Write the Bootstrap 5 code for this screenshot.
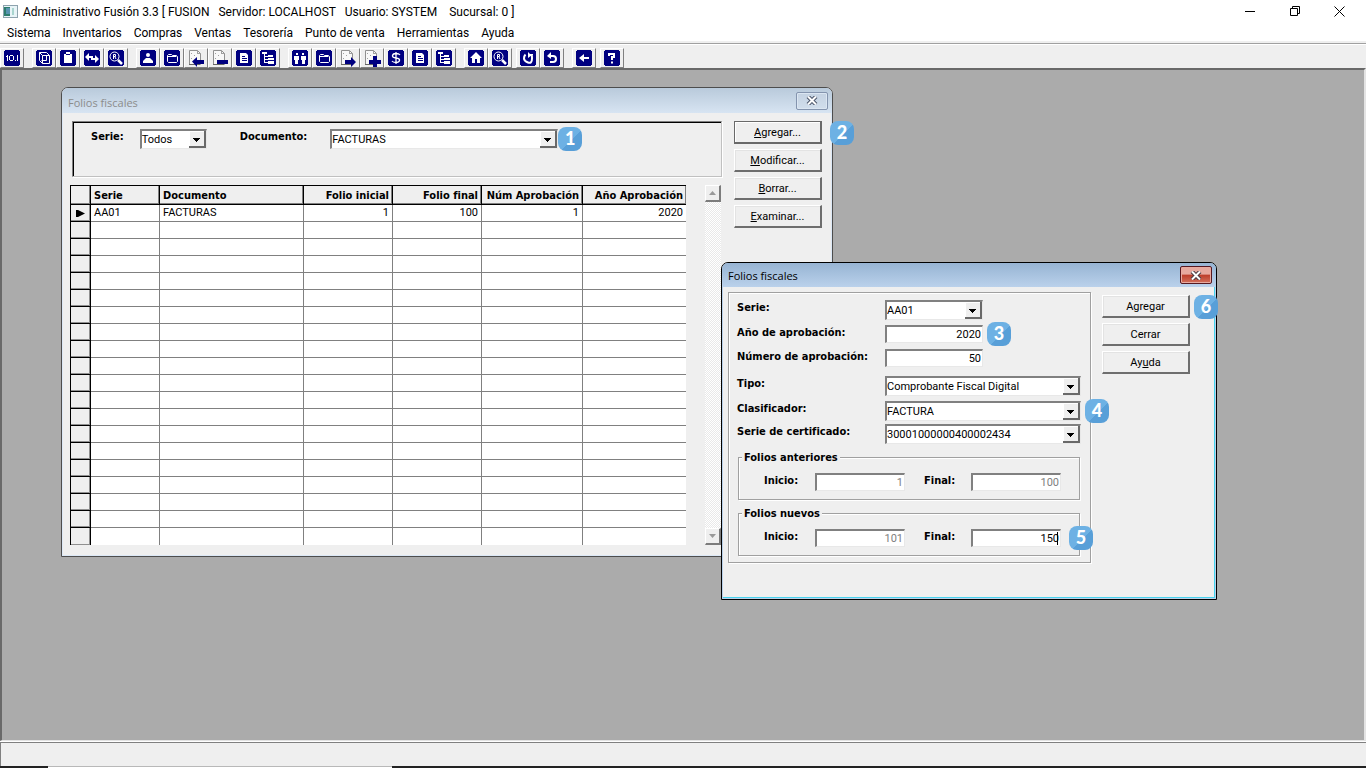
<!DOCTYPE html>
<html lang="es">
<head>
<meta charset="utf-8">
<meta name="viewport" content="width=device-width, initial-scale=1">
<title>Administrativo Fusión 3.3</title>
<link rel="stylesheet" href="https://cdn.jsdelivr.net/npm/bootstrap@5.3.0/dist/css/bootstrap.min.css">
<style>
  :root { --face: #efefef; --navy: #000080; }
  body { background: var(--face); color: #000; font: 11px/15px Roboto, "Open Sans", sans-serif; overflow: hidden; }
  /* application frame */
  .app-title { height: 22px; font-size: 12px; padding-left: 3px; }
  .app-title svg { display: block; }
  .app-title .caption-text { white-space: pre; padding-top: 2px; }
  .frame-btn { width: 45px; height: 22px; background: none; border: 0; padding: 0; display: grid; place-items: center; }
  .app-menu { height: 19px; font-size: 12px; padding-left: 1px; }
  .app-menu a { color: #000; text-decoration: none; padding: 4px 6px 0; }
  .tool-strip { border-top: 1px solid #a0a0a0; box-shadow: inset 0 1px #fff; padding: 4px 0 0; height: 25px; margin-top: 2px; }
  .tool-btn { width: 24px; height: 20px; padding: 2px 2px 1px 3px; border: 1px solid; border-color: #fff #808080 #808080 #fff; background: var(--face); display: block; }
  .tool-btn svg { display: block; width: 16px; height: 16px; overflow: visible; margin-top: -1px; }
  .workspace { background: #ababab; border: solid; border-width: 2px 2px 1px 2px; border-color: #696969 #e3e3e3 #e3e3e3 #696969; }
  .status-bar { height: 24px; margin-top: 1px; border-top: 1px solid #808080; border-left: 1px solid #808080; box-shadow: 0 -1px #fff; }
  .task-edge { height: 2px; background: #222; }
  .task-edge span { display: block; width: 344px; height: 2px; margin-left: 48px; background: #fff; border-top: 1px solid #b8b8b8; }
  /* child windows */
  .mdi { background: var(--face); border: 1px solid #4d4d4d; border-radius: 7px 7px 0 0; box-shadow: inset 0 0 0 1px #dce8f6; }
  .mdi-list { left: 59px; top: 17px; width: 772px; }
  .mdi-edit { left: 719px; top: 192px; width: 496px; border-color: #000; box-shadow: inset 0 0 0 1px #b9d1ea, inset -2px -2px #46d3ee; padding-bottom: 36px; }
  .mdi-title { height: 25px; border-radius: 6px 6px 0 0; padding: 0 4px 0 6px; font: 11px/25px "Open Sans", sans-serif; background: linear-gradient(#b9cadb, #d7e4f2); color: #8c8c8c; }
  .mdi-edit .mdi-title { background: linear-gradient(#97b4d3, #bad1eb); color: #000; height: 24px; }
  .mdi-close { width: 32px; height: 18px; padding: 0; border: 1px solid #8494ae; border-radius: 2px; background: linear-gradient(#c4d2e2, #d1deec); box-shadow: inset 0 0 0 1px #dbe6f2; display: grid; place-items: center; }
  .mdi-edit .mdi-close { border-color: #561820; background: linear-gradient(#e7a99f 0 45%, #bd3d2a 50%, #d2705c); box-shadow: inset 0 0 0 1px #e8aaa0; }
  .list-body { padding: 8px 8px 11px 10px; }
  .edit-body { padding: 5px 0 0 6px; }
  .action-col { gap: 5px; margin-left: 12px; margin-right: 2px; }
  .mdi-edit .action-col { margin: 3px 0 0 11px; }
  /* classic controls */
  .classic-btn { width: 88px; height: 23px; font-size: 11px; line-height: 19px; padding: 0; color: #000; background: var(--face); border: solid; border-width: 1px 2px 2px 1px; border-color: #fff #6e6e6e #6e6e6e #fff; box-shadow: inset 1px 1px #e3e3e3; display: block; }
  .classic-btn.is-default { border-color: #696969; box-shadow: inset 1px 1px #fff; }
  .field { display: block; width: 100%; height: 18px; color: #000; background-color: #fff; border: solid; border-width: 2px 1px 1px 2px; border-color: #808080 #e8e8e8 #e8e8e8 #808080; border-radius: 0; padding: 0 1px; font-size: 11px; line-height: 15px; outline: 0; }
  select.field { height: 20px; padding: 0; appearance: none; background: #fff url("data:image/svg+xml,%3Csvg xmlns='http://www.w3.org/2000/svg' width='17' height='17' shape-rendering='crispEdges'%3E%3Cpath fill='%23efefef' d='M0 0h17v17H0z'/%3E%3Cpath fill='%23696969' d='M15 0h2v17H0v-2h15z'/%3E%3Cpath fill='%23fff' d='M0 0h15v1H1v14H0z'/%3E%3Cpath d='M4 7h7v1H4zM5 8h5v1H5zM6 9h3v1H6zM7 10h1v1H7z'/%3E%3C/svg%3E") no-repeat right top; }
  input.field { text-align: right; }
  input.field:disabled { color: #808080; -webkit-text-fill-color: #808080; opacity: 1; }
  .caption-bold, .grid-table th, .etched legend { font-family: "DejaVu Sans Condensed", "Open Sans", sans-serif; font-weight: 700; font-size: 11px; line-height: 15px; }
  .filter-panel { height: 56px; padding: 7px 18px; border: 1px solid; border-color: #808080 #c0c0c0 #c0c0c0 #808080; box-shadow: inset 1px 1px #000, 1px 1px #fff; }
  .doc-label { margin: 0 23px 0 33px; }
  .w-serie { width: 67px; } .w-doc { width: 228px; }
  .grid-table { width: 616px; table-layout: fixed; border-collapse: collapse; background: #fff; margin: 0 0 0 -2px; }
  .grid-table th, .grid-table td { height: 17px; padding: 0 3px; line-height: 14px; border: solid #808080; border-width: 0 1px 1px 0; overflow: hidden; white-space: nowrap; text-align: right; }
  .grid-table thead th { height: 19px; line-height: 15px; background: var(--face); border: 1px solid #000; box-shadow: inset -1px -1px #808080; }
  .grid-table tr > :nth-child(2), .grid-table tr > :nth-child(3) { text-align: left; }
  .grid-table tbody tr > :first-child { background: var(--face); border: 1px solid #000; box-shadow: inset -1px -1px #909090; padding: 0 5px; }
  .grid-table tr > :last-child { border-right: 0; }
  .grid-table tbody tr:last-child > * { border-bottom: 0; }
  .c-mark { width: 20px; } .c-serie { width: 69px; } .c-doc { width: 144px; } .c-ini, .c-fin { width: 89px; } .c-num { width: 101px; }
  .scroll-track { width: 16px; margin-right: 1px; background: repeating-conic-gradient(#e9e9e9 0 25%, #fff 0 50%) 0 0 / 2px 2px; }
  .scroll-btn { width: 16px; height: 17px; padding: 0; background: var(--face); border: solid; border-width: 1px 2px 2px 1px; border-color: #fff #7c7c7c #7c7c7c #fff; display: grid; place-items: center; }
  .etched { border: 1px solid #a0a0a0; box-shadow: 1px 1px #fff, inset 1px 1px #fff; margin: 0; padding: 0; }
  .edit-frame { width: 363px; padding: 7px 9px 6px 8px; }
  .edit-grid { display: grid; grid-template-columns: 148px 1fr; grid-template-rows: 25px 24px 27px 25px 23px 22px; align-items: start; }
  .w-short { width: 98px; }
  fieldset.etched { height: 43px; margin: 11px 1px 0 1px; position: relative; padding: 15px 18px 0 25px; display: flex; align-items: flex-start; }
  fieldset.etched + fieldset.etched { margin-top: 13px; }
  .etched legend { position: absolute; top: -8px; left: 3px; width: auto; padding: 0 2px; margin: 0; background: var(--face); }
  .w-label { width: 51px; } .w-num { width: 90px; } .gap-col { width: 19px; }
  .caret { width: 1px; height: 13px; right: 3px; top: 3px; background: #000; }
  .step { width: 24px; height: 24px; border-radius: 8px; color: #fff; font: 900 18px/23px Lato, sans-serif; text-align: center; background: linear-gradient(135deg, #6db1e4 55%, #589fd8 56%); z-index: 3; }
</style>
</head>
<body class="vh-100 d-flex flex-column">

<svg class="d-none">
  <symbol id="tile" viewBox="0 0 16 16"><path fill="#000080" d="M1 0h14v1h1v14h-1v1H1v-1H0V1h1z"/></symbol>
  <symbol id="i-folder" viewBox="0 0 16 16"><use href="#tile"/><path fill="none" stroke="#fff" d="M3.500 5.500l1-1h3l1 1h4l1 1v5l-1 1h-8l-1-1zM3.500 6.500h9"/></symbol>
  <symbol id="i-doc" viewBox="0 0 16 16"><use href="#tile"/><path fill="#fff" d="M4 3h6l2 2v8H4z"/><path fill="#000080" d="M6 6h3v1H6zM6 8h5v1H6zM6 10h5v1H6z"/></symbol>
  <symbol id="i-tree" viewBox="0 0 16 16"><use href="#tile"/><path fill="#fff" d="M2 2h5v2H2zM4 4h1v9H4zM5 6h3v1H5zM5 9h3v1H5zM5 12h3v1H5zM8 5h5v2H8zM8 8h6v2H8zM8 11h6v3H8z"/></symbol>
  <symbol id="i-zoom" viewBox="0 0 16 16"><use href="#tile"/><g fill="none" stroke="#fff"><circle cx="6.500" cy="6.500" r="4.500"/><path d="M5.500 9V4.500h2v2h-2M7 7l1 2"/><path stroke-width="2.500" d="M10 10l4 4"/></g></symbol>
  <symbol id="i-page" viewBox="0 0 17 17"><path fill="#f8f8f8" stroke="#909090" d="M1.500.5h8l3 3v11h-11z"/><path fill="#a0a0a0" d="M9 0h1v3h3v1H9zM3 3h1v1H3zM6 5h1v1H6zM3 8h1v1H3z"/><path fill="#666" d="M1 14h11v1H1z"/></symbol>
</svg>

<header class="bg-white">
  <div class="app-title d-flex align-items-center">
    <svg width="16" height="13" class="me-1" shape-rendering="crispEdges"><path fill="#8ea3ae" d="M0 0h15v13H0z"/><path fill="#e8f4f7" d="M1 1h13v11H1z"/><path fill="#2e7d6e" d="M1 2h6v9H1z"/><path fill="#5894b0" d="M3 3h4v6H3z"/><path fill="#a9d5cf" d="M9 3h2v7H9z"/></svg>
    <span class="caption-text">Administrativo Fusión 3.3 [ FUSION   Servidor: LOCALHOST   Usuario: SYSTEM    Sucursal: 0 ]</span>
    <div class="ms-auto d-flex pe-1">
      <button class="frame-btn" aria-label="Minimizar"><svg width="10" height="10"><path stroke="#000" d="M0 5.500h10"/></svg></button>
      <button class="frame-btn" aria-label="Restaurar"><svg width="10" height="10"><path fill="none" stroke="#000" d="M.5 2.500h7v7h-7zM2.500 2V.5h7v7H8"/></svg></button>
      <button class="frame-btn" aria-label="Cerrar"><svg width="11" height="11"><path stroke="#000" d="M.5.5l10 10M10.500.5l-10 10"/></svg></button>
    </div>
  </div>
  <nav class="app-menu d-flex">
    <a href="#">Sistema</a><a href="#">Inventarios</a><a href="#">Compras</a><a href="#">Ventas</a><a href="#">Tesorería</a><a href="#">Punto de venta</a><a href="#">Herramientas</a><a href="#">Ayuda</a>
  </nav>
</header>

<div class="tool-strip d-flex" role="toolbar" aria-label="Herramientas">
  <div class="d-flex me-2">
    <button class="tool-btn" aria-label="10.1"><svg shape-rendering="crispEdges"><use href="#tile"/><path fill="#fff" d="M3 5h1v6H3zM2 6h1v1H2zM6 5h3v1H6zM6 10h3v1H6zM5 6h1v4H5zM9 6h1v4H9zM11 10h1v1h-1zM13 5h1v6h-1z"/></svg></button>
  </div>
  <div class="d-flex me-2">
    <button class="tool-btn" aria-label="Productos"><svg><use href="#tile"/><path fill="none" stroke="#fff" d="M3.500 2.500h7l3 3v8h-7l-3-3zM3.500 2.500l3 3h7M6.500 5.500v8M5.500 10.500h5v-5"/></svg></button>
    <button class="tool-btn" aria-label="Portapapeles"><svg><use href="#tile"/><path fill="#fff" d="M4 4h2V2h4v2h2v9H4z"/><path fill="#000080" d="M6 4h4v1H6z"/></svg></button>
    <button class="tool-btn" aria-label="Movimientos"><svg><use href="#tile"/><path fill="#fff" d="M1 7l4-4v3h4v2H5v3zM15 9l-4-4v3H7v2h4v3z"/></svg></button>
    <button class="tool-btn" aria-label="Buscar producto"><svg><use href="#i-zoom"/></svg></button>
  </div>
  <div class="d-flex me-2">
    <button class="tool-btn" aria-label="Proveedores"><svg><use href="#tile"/><circle cx="8" cy="5" r="2" fill="#fff"/><path fill="#fff" d="M6 8h4l3 3v2H3v-2z"/></svg></button>
    <button class="tool-btn" aria-label="Abrir compras"><svg><use href="#i-folder"/></svg></button>
    <button class="tool-btn" aria-label="Entrada"><svg><use href="#i-page" width="17" height="17"/><path fill="#000080" d="M4 11.500L9 7v3h7v4H9v3z"/></svg></button>
    <button class="tool-btn" aria-label="Quitar"><svg><use href="#i-page" width="17" height="17"/><path fill="#000080" d="M5 10h11v4H5z"/></svg></button>
    <button class="tool-btn" aria-label="Documento de compra"><svg><use href="#i-doc"/></svg></button>
    <button class="tool-btn" aria-label="Árbol de compras"><svg><use href="#i-tree"/></svg></button>
  </div>
  <div class="d-flex me-2">
    <button class="tool-btn" aria-label="Clientes"><svg><use href="#tile"/><path fill="#fff" d="M4 3h2v2H4zM2 6h5v4H6v4H5v-3v3H3v-4H2zM10 3h2v2h-2zM9 6h5v4h-1v4h-3v-4H9z"/></svg></button>
    <button class="tool-btn" aria-label="Abrir ventas"><svg><use href="#i-folder"/></svg></button>
    <button class="tool-btn" aria-label="Salida"><svg><use href="#i-page" width="17" height="17"/><path fill="#000080" d="M16 12L11 7v3H5v4h6v3z"/></svg></button>
    <button class="tool-btn" aria-label="Añadir"><svg><use href="#i-page" width="17" height="17"/><path fill="#000080" d="M9 6h4v4h4v4h-4v3H9v-3H5v-4h4z"/></svg></button>
    <button class="tool-btn" aria-label="Pagos"><svg><use href="#tile"/><path fill="none" stroke="#fff" stroke-width="1.300" d="M12 5Q11 3.500 8 3.500T4.500 5.500T8 8t3.500 2.500T8 12.500T4 11M8 2v12"/></svg></button>
    <button class="tool-btn" aria-label="Documento de venta"><svg><use href="#i-doc"/></svg></button>
    <button class="tool-btn" aria-label="Árbol de ventas"><svg><use href="#i-tree"/></svg></button>
  </div>
  <div class="d-flex me-1">
    <button class="tool-btn" aria-label="Inicio"><svg><use href="#tile"/><path fill="#fff" d="M8 2l6 6h-2v5H9V9H7v4H4V8H2z"/></svg></button>
    <button class="tool-btn" aria-label="Buscar"><svg><use href="#i-zoom"/></svg></button>
  </div>
  <div class="d-flex me-2">
    <button class="tool-btn" aria-label="Rehacer"><svg><use href="#tile"/><path fill="none" stroke="#fff" stroke-width="2" d="M5.500 4.500Q4 6 4 8.500T8 12.500t4-4T11 6"/><path fill="#fff" d="M8 2v6l4-3h1V4h-3z"/></svg></button>
    <button class="tool-btn" aria-label="Deshacer"><svg><use href="#tile"/><path fill="none" stroke="#fff" stroke-width="2" d="M5 6h4Q12 6 12 9T9 12H6"/><path fill="#fff" d="M7 2v7L3 6z"/></svg></button>
  </div>
  <div class="d-flex me-1">
    <button class="tool-btn" aria-label="Atrás"><svg><use href="#tile"/><path fill="#fff" d="M3 8l5-4v3h5v2H8v3z"/></svg></button>
  </div>
  <div class="d-flex">
    <button class="tool-btn" aria-label="Ayuda"><svg><use href="#tile"/><path fill="none" stroke="#fff" stroke-width="2" d="M5 6V4h5v3H8v3M8 11.500v2"/></svg></button>
  </div>
</div>

<main class="workspace flex-grow-1 position-relative">

  <section class="mdi mdi-list position-absolute" aria-label="Folios fiscales">
    <div class="mdi-title d-flex align-items-center">
      <span class="me-auto pt-1">Folios fiscales</span>
      <button class="mdi-close" aria-label="Cerrar"><svg width="12" height="9"><path stroke="#4c566b" stroke-width="4" d="M2 .5l8 8M10 .5l-8 8"/><path stroke="#fff" stroke-width="2" d="M2 .5l8 8M10 .5l-8 8"/></svg></button>
    </div>
    <div class="list-body d-flex">
      <div class="flex-grow-1">
        <div class="filter-panel d-flex align-items-start mb-2">
          <label class="caption-bold" for="f-serie">Serie:</label>
          <div class="w-serie ms-3"><select id="f-serie" class="field"><option>Todos</option></select></div>
          <label class="caption-bold doc-label" for="f-doc">Documento:</label>
          <div class="w-doc position-relative"><select id="f-doc" class="field"><option>FACTURAS</option></select>
            <span class="step position-absolute start-100 top-50 translate-middle-y">1</span></div>
        </div>
        <div class="d-flex justify-content-between">
          <table class="grid-table">
            <colgroup><col class="c-mark"><col class="c-serie"><col class="c-doc"><col class="c-ini"><col class="c-fin"><col class="c-num"><col></colgroup>
            <thead><tr><th></th><th>Serie</th><th>Documento</th><th>Folio inicial</th><th>Folio final</th><th>Núm Aprobación</th><th>Año Aprobación</th></tr></thead>
            <tbody id="rows">
              <tr><td><svg class="d-block" width="9" height="7"><path d="M0 0h2l7 3.500L2 7H0z"/></svg></td><td>AA01</td><td>FACTURAS</td><td>1</td><td>100</td><td>1</td><td>2020</td></tr>
            </tbody>
          </table>
          <div class="scroll-track d-flex flex-column justify-content-between">
            <button class="scroll-btn" aria-label="Subir"><svg width="7" height="4"><path fill="#999" d="M0 4h7L3.500 0z"/></svg></button>
            <button class="scroll-btn" aria-label="Bajar"><svg width="7" height="4"><path fill="#999" d="M0 0h7L3.500 4z"/></svg></button>
          </div>
        </div>
      </div>
      <div class="d-flex flex-column action-col">
        <div class="position-relative"><button class="classic-btn is-default"><u>A</u>gregar...</button>
          <span class="step position-absolute start-100 top-50 translate-middle-y ms-2">2</span></div>
        <button class="classic-btn"><u>M</u>odificar...</button>
        <button class="classic-btn"><u>B</u>orrar...</button>
        <button class="classic-btn"><u>E</u>xaminar...</button>
      </div>
    </div>
  </section>

  <section class="mdi mdi-edit position-absolute" aria-label="Agregar folios">
    <div class="mdi-title d-flex align-items-center">
      <span class="me-auto">Folios fiscales</span>
      <button class="mdi-close" aria-label="Cerrar"><svg width="12" height="9"><path stroke="#4c3a40" stroke-width="4" d="M2 .5l8 8M10 .5l-8 8"/><path stroke="#fff" stroke-width="2" d="M2 .5l8 8M10 .5l-8 8"/></svg></button>
    </div>
    <div class="edit-body d-flex">
      <form class="etched edit-frame">
        <div class="edit-grid">
          <label class="caption-bold" for="e-serie">Serie:</label>
          <div class="w-short"><select id="e-serie" class="field"><option>AA01</option></select></div>
          <label class="caption-bold" for="e-anio">Año de aprobación:</label>
          <div class="w-short position-relative"><input id="e-anio" class="field" value="2020"><span class="step position-absolute start-100 top-50 translate-middle-y ms-1">3</span></div>
          <label class="caption-bold" for="e-num">Número de aprobación:</label>
          <div class="w-short"><input id="e-num" class="field" value="50"></div>
          <label class="caption-bold" for="e-tipo">Tipo:</label>
          <div><select id="e-tipo" class="field"><option>Comprobante Fiscal Digital</option></select></div>
          <label class="caption-bold" for="e-clas">Clasificador:</label>
          <div class="position-relative"><select id="e-clas" class="field"><option>FACTURA</option></select><span class="step position-absolute start-100 top-50 translate-middle-y ms-1">4</span></div>
          <label class="caption-bold" for="e-cert">Serie de certificado:</label>
          <div><select id="e-cert" class="field"><option>30001000000400002434</option></select></div>
        </div>
        <fieldset class="etched">
          <legend>Folios anteriores</legend>
          <label class="caption-bold w-label" for="a-ini">Inicio:</label>
          <div class="w-num"><input id="a-ini" class="field" value="1" disabled></div>
          <span class="gap-col"></span>
          <label class="caption-bold me-auto" for="a-fin">Final:</label>
          <div class="w-num"><input id="a-fin" class="field" value="100" disabled></div>
        </fieldset>
        <fieldset class="etched">
          <legend>Folios nuevos</legend>
          <label class="caption-bold w-label" for="n-ini">Inicio:</label>
          <div class="w-num"><input id="n-ini" class="field" value="101" disabled></div>
          <span class="gap-col"></span>
          <label class="caption-bold me-auto" for="n-fin">Final:</label>
          <div class="w-num position-relative"><input id="n-fin" class="field" value="150"><span class="caret position-absolute"></span><span class="step position-absolute start-100 top-50 translate-middle-y ms-2">5</span></div>
        </fieldset>
      </form>
      <div class="action-col d-flex flex-column">
        <div class="position-relative"><button class="classic-btn">Agregar</button><span class="step position-absolute start-100 top-50 translate-middle-y ms-1">6</span></div>
        <button class="classic-btn">Cerrar</button>
        <button class="classic-btn">Ay<u>u</u>da</button>
      </div>
    </div>
  </section>
</main>

<footer>
  <div class="status-bar"></div>
  <div class="task-edge"><span></span></div>
</footer>

<script>
  // the grid always shows twenty lines
  const body = document.getElementById('rows');
  for (let i = 1; i < 20; i++) {
    const row = body.insertRow();
    for (let c = 0; c < 7; c++) row.insertCell();
  }
</script>
<script src="https://cdn.jsdelivr.net/npm/bootstrap@5.3.0/dist/js/bootstrap.bundle.min.js"></script>
</body>
</html>
